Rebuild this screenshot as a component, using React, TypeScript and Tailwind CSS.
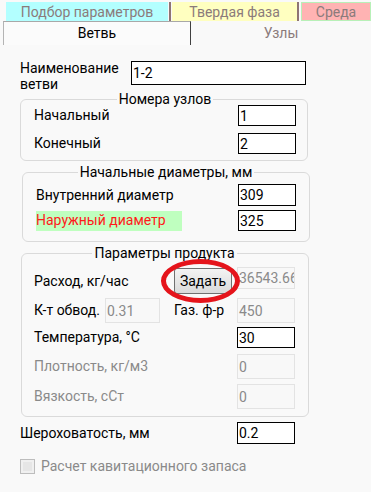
import React from "react";

const font = { fontFamily: 'Roboto, "Noto Sans", "Liberation Sans", sans-serif' };

const Field: React.FC<{ value: string; disabled?: boolean; className?: string }> = ({ value, disabled, className }) => (
  <div
    className={
      "flex items-center overflow-hidden whitespace-nowrap pl-[1px] text-[14px] leading-none " +
      (disabled ? "border border-[#e3e3e3] bg-[#f8f8f8] text-[#8a8a8a] " : "border border-black bg-white text-black ") +
      (className ?? "")
    }
  >
    {value}
  </div>
);

export default function App() {
  return (
    <div className="w-[371px] h-[492px] bg-[#f9f9f9] text-[14px] text-black overflow-hidden" style={font}>
      {/* верхние вкладки */}
      <div className="flex pt-[2px] h-[21px] text-[#8b7b7b] text-[14px] leading-none">
        <div className="ml-[6px] w-[162px] bg-[#b3ffff] flex items-center justify-center">Подбор параметров</div>
        <div className="ml-[1px] w-[2px] bg-[#8e7474]" />
        <div className="ml-[1px] w-[125px] bg-[#ffffc0] flex items-center justify-center">Твердая фаза</div>
        <div className="w-[2px] bg-[#8e7474]" />
        <div className="ml-[2px] flex-1 bg-[#ffb3b3] border border-[#b8f0b8] flex items-center justify-center">Среда</div>
      </div>
      <div className="flex h-[24px] text-[14px]">
        <div className="ml-[3px] w-[188px] border-l border-t border-r border-l-[#b4b4b4] border-t-[#a8a8a8] border-r-[#404040] bg-[#fbfbfb] flex items-center justify-center">
          Ветвь
        </div>
        <div className="flex-1 flex items-center justify-center text-[#8b7b7b]">Узлы</div>
      </div>

      <div className="pl-[20px]">
        {/* наименование */}
        <div className="flex mt-[16px]">
          <div className="w-[111px] leading-[16px] -mt-[1px]">
            Наименование
            <br />
            ветви
          </div>
          <Field value="1-2" className="w-[175px] h-[24px]" />
        </div>

        {/* номера узлов */}
        <fieldset className="mt-[1px] w-[288px] border border-[#dadada] rounded-[6px] pl-[13px] pr-[11px] pb-[6px]">
          <legend className="mx-auto px-[2px] leading-[12px]">Номера узлов</legend>
          <div className="flex items-center justify-between h-[21px]">
            <span>Начальный</span>
            <Field value="1" className="w-[58px] h-[21px]" />
          </div>
          <div className="flex items-center justify-between h-[21px] mt-[7px]">
            <span>Конечный</span>
            <Field value="2" className="w-[58px] h-[21px]" />
          </div>
        </fieldset>

        {/* диаметры */}
        <fieldset className="mt-[5px] ml-[2px] w-[288px] border border-[#dadada] rounded-[6px] pl-[13px] pr-[13px] pt-[6px] pb-[10px]">
          <legend className="mx-auto px-[2px] leading-[12px]">Начальные диаметры, мм</legend>
          <div className="flex items-center justify-between h-[22px]">
            <span>Внутренний диаметр</span>
            <Field value="309" className="w-[58px] h-[22px]" />
          </div>
          <div className="flex items-center justify-between h-[21px] mt-[4px]">
            <span className="w-[146px] h-[20px] bg-[#bfffbf] text-[#ff1a1a] flex items-center">Наружный диаметр</span>
            <Field value="325" className="w-[58px] h-[21px]" />
          </div>
        </fieldset>

        {/* параметры продукта */}
        <fieldset className="mt-[5px] ml-[1px] w-[288px] border border-[#dadada] rounded-[6px] pl-[12px] pr-[13px] pt-[8px] pb-[7px]">
          <legend className="mx-auto px-[2px] leading-[12px]">Параметры продукта</legend>
          <div className="flex items-start h-[27px]">
            <span className="w-[140px] mt-[4px]">Расход, кг/час</span>
            <div className="relative w-[58px] h-[26px] mt-[1px]">
              <button className="w-full h-full rounded-[3px] border border-[#707070] bg-gradient-to-b from-[#f3f3f3] to-[#dadada] text-black text-[14px]">
                Задать
              </button>
              <div className="absolute left-[-13px] top-[-9px] w-[79px] h-[44px] rounded-[50%] border-[5px] border-[#e5141b] pointer-events-none" />
            </div>
            <Field value="36543.663" disabled className="ml-[5px] w-[58px] h-[22px]" />
          </div>
          <div className="flex items-center h-[25px] mt-[4px]">
            <span className="w-[71px]">К-т обвод.</span>
            <Field value="0.31" disabled className="w-[55px] h-[25px]" />
            <span className="ml-[14px] w-[63px]">Газ. ф-р</span>
            <Field value="450" disabled className="w-[58px] h-[25px]" />
          </div>
          <div className="flex items-center justify-between h-[21px] mt-[4px]">
            <span>Температура, °C</span>
            <Field value="30" className="w-[58px] h-[21px]" />
          </div>
          <div className="flex items-center justify-between h-[25px] mt-[6px] text-[#8a8a8a]">
            <span>Плотность, кг/м3</span>
            <Field value="0" disabled className="w-[58px] h-[25px]" />
          </div>
          <div className="flex items-center justify-between h-[25px] mt-[5px] text-[#8a8a8a]">
            <span>Вязкость, сСт</span>
            <Field value="0" disabled className="w-[58px] h-[25px]" />
          </div>
        </fieldset>

        {/* шероховатость */}
        <div className="flex items-center justify-between w-[275px] h-[22px] mt-[5px]">
          <span>Шероховатость, мм</span>
          <Field value="0.2" className="w-[58px] h-[22px]" />
        </div>

        <div className="flex items-center mt-[12px] text-[#8a8a8a]">
          <span className="w-[15px] h-[15px] border border-[#bdbdbd] bg-[#f0f0f0] p-[2px]">
            <span className="block w-full h-full bg-[#e6e6e6]" />
          </span>
          <span className="ml-[6px]">Расчет кавитационного запаса</span>
        </div>
      </div>
    </div>
  );
}
